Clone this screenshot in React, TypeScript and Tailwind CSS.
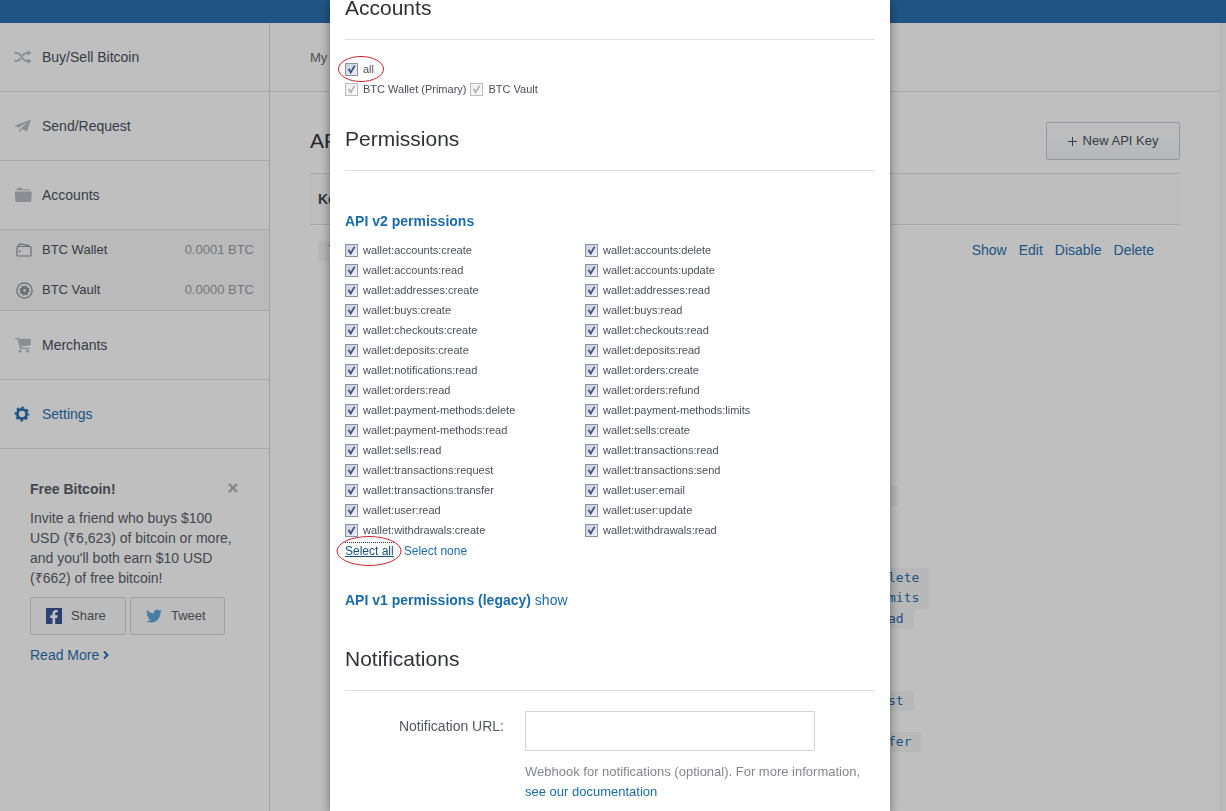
import { useState } from "react";
import { FaFacebookF, FaTwitter } from "react-icons/fa";

const leftScopes = [
  "wallet:accounts:create",
  "wallet:accounts:read",
  "wallet:addresses:create",
  "wallet:buys:create",
  "wallet:checkouts:create",
  "wallet:deposits:create",
  "wallet:notifications:read",
  "wallet:orders:read",
  "wallet:payment-methods:delete",
  "wallet:payment-methods:read",
  "wallet:sells:read",
  "wallet:transactions:request",
  "wallet:transactions:transfer",
  "wallet:user:read",
  "wallet:withdrawals:create",
];

const rightScopes = [
  "wallet:accounts:delete",
  "wallet:accounts:update",
  "wallet:addresses:read",
  "wallet:buys:read",
  "wallet:checkouts:read",
  "wallet:deposits:read",
  "wallet:orders:create",
  "wallet:orders:refund",
  "wallet:payment-methods:limits",
  "wallet:sells:create",
  "wallet:transactions:read",
  "wallet:transactions:send",
  "wallet:user:email",
  "wallet:user:update",
  "wallet:withdrawals:read",
];

const allScopes = [...leftScopes, ...rightScopes];

// tails of the granted scopes, one per table line, null where the scope is too short to show
const scopeTails = [
  ...Array(12).fill(null),
  "",
  null,
  null,
  null,
  "lete",
  "mits",
  "ad",
  null,
  null,
  null,
  "st",
  null,
  "fer",
];

function ShuffleIcon() {
  return (
    <svg width="18" height="14" viewBox="0 0 18 14" fill="none" stroke="currentColor" strokeWidth="2">
      <path d="M0.5 3h2.500c4 0 5.500 8 9.500 8H14" />
      <path d="M0.500 11h2.500c1.500 0 2.600-1.100 3.600-2.600M8.600 5.600C9.600 4.100 10.800 3 12.500 3H14" />
      <path d="M13.500 0.200L17.800 3l-4.300 2.800zM13.500 8.200l4.300 2.800-4.300 2.800z" fill="currentColor" stroke="none" />
    </svg>
  );
}

function PlaneIcon() {
  return (
    <svg width="18" height="14" viewBox="0 0 18 14" fill="currentColor">
      <path d="M17 0.500L0.500 6.800l4.200 1.800L14 2.800 6.800 9.600l6.200 2.800z" />
      <path d="M5.300 9.800v3.600l2.600-2.300z" />
    </svg>
  );
}

function FolderIcon() {
  return (
    <svg width="18" height="16" viewBox="0 0 18 16" fill="currentColor">
      <path d="M2 3.200L3.500 0.800h4l1 1.500h7.500v0.900z" />
      <path d="M0.800 4.500h17l-0.600 10.500H1.500z" />
    </svg>
  );
}

function WalletIcon() {
  return (
    <svg width="16" height="14" viewBox="0 0 16 14" fill="none" stroke="currentColor" strokeWidth="1.2">
      <rect x="1" y="3.500" width="14" height="9.500" rx="1" />
      <path d="M1.500 3.500L3.800 0.800l8.700 1.500 0.400 1.200" />
      <circle cx="3.700" cy="8.200" r="0.900" fill="currentColor" stroke="none" />
    </svg>
  );
}

function VaultIcon() {
  return (
    <svg width="17" height="17" viewBox="0 0 16 16" fill="none" stroke="currentColor">
      <circle cx="8" cy="8" r="7.200" strokeWidth="1.200" />
      <circle cx="8" cy="8" r="2.600" strokeWidth="2.600" />
      <circle cx="8" cy="8" r="4.300" strokeWidth="1.200" strokeDasharray="1.700 1.677" />
    </svg>
  );
}

function CartIcon() {
  return (
    <svg width="18" height="16" viewBox="0 0 18 16" fill="currentColor">
      <path d="M1 0.800h3.400l0.500 1H16.800v6.200L7.300 9.500l0.300 1.200h8V12H6L3.500 2.200H1.500z" />
      <circle cx="6" cy="14" r="1.600" />
      <circle cx="13.600" cy="14" r="1.600" />
    </svg>
  );
}

function GearIcon() {
  return (
    <svg width="16" height="16" viewBox="0 0 16 16" fill="none" stroke="currentColor">
      <circle cx="8" cy="8" r="4.600" strokeWidth="2.800" />
      <circle cx="8" cy="8" r="6.400" strokeWidth="2" strokeDasharray="2.600 2.427" strokeDashoffset="1.300" />
    </svg>
  );
}

function NavItem({ icon, label, active = false }) {
  return (
    <a
      href="#"
      className={
        active
          ? "flex h-[69px] items-center border-b border-[#dfe2e6] pl-[14px] text-sm text-[#2b71b1]"
          : "flex h-[69px] items-center border-b border-[#dfe2e6] pl-[14px] text-sm text-[#4b505c]"
      }
    >
      <span className={active ? "w-7 text-[#2b71b1]" : "w-7 text-[#b9bdc3]"}>{icon}</span>
      {label}
    </a>
  );
}

function AccountItem({ icon, label, balance }) {
  return (
    <a href="#" className="flex h-10 items-center pr-[15px] pl-4 text-[13px] text-[#4b505c]">
      <span className="w-[26px] text-[#8d9299]">{icon}</span>
      {label}
      <span className="ml-auto text-[#9b9fa5]">{balance}</span>
    </a>
  );
}

function Sidebar() {
  return (
    <aside className="w-[270px] shrink-0 border-r border-[#d5d8df]">
      <nav>
        <NavItem icon={<ShuffleIcon />} label="Buy/Sell Bitcoin" />
        <NavItem icon={<PlaneIcon />} label="Send/Request" />
        <NavItem icon={<FolderIcon />} label="Accounts" />
        <div className="border-b border-[#dfe2e6] bg-[#f9f9f9]">
          <AccountItem icon={<WalletIcon />} label="BTC Wallet" balance="0.0001 BTC" />
          <AccountItem icon={<VaultIcon />} label="BTC Vault" balance="0.0000 BTC" />
        </div>
        <NavItem icon={<CartIcon />} label="Merchants" />
        <NavItem icon={<GearIcon />} label="Settings" active />
      </nav>

      <section className="px-[30px] pt-[30px] text-sm leading-5 text-[#5a5e68]">
        <div className="mb-[9px] flex items-start justify-between">
          <h3 className="font-bold">Free Bitcoin!</h3>
          <button aria-label="Dismiss" className="pt-1 text-[#b0b2b6]">
            <svg width="12" height="10" viewBox="0 0 12 10" fill="none" stroke="currentColor" strokeWidth="2.400">
              <path d="M2 1l8 8M10 1L2 9" />
            </svg>
          </button>
        </div>
        <p>
          Invite a friend who buys $100 USD (₹6,623) of bitcoin or more, and you'll both earn $10 USD (₹662) of free
          bitcoin!
        </p>
        <div className="mt-[9px] mb-[10px] flex gap-1">
          <button className="flex h-[38px] w-24 items-center gap-[9px] rounded-[2px] border border-[#d3d6dc] bg-[#fbfbfc] pl-[15px] text-[13px]">
            <span className="flex size-4 items-end justify-end bg-[#3b5598] pr-px text-white">
              <FaFacebookF size={14} />
            </span>
            Share
          </button>
          <button className="flex h-[38px] w-[95px] items-center gap-[9px] rounded-[2px] border border-[#d3d6dc] bg-[#fbfbfc] pl-[15px] text-[13px]">
            <FaTwitter size={16} className="text-[#5fa9dd]" />
            Tweet
          </button>
        </div>
        <a href="#" className="inline-flex items-center gap-1 text-[#2b71b1]">
          Read More
          <svg width="6" height="10" viewBox="0 0 6 10" fill="none" stroke="currentColor" strokeWidth="2">
            <path d="M1 1.500L4.500 5 1 8.500" />
          </svg>
        </a>
      </section>
    </aside>
  );
}

function KeysPage() {
  return (
    <main className="min-w-0 flex-1">
      <div className="flex h-[69px] items-center border-b border-[#dfe2e6] px-10 pt-px text-[13px] text-[#6a6e76]">
        My
      </div>
      <div className="px-10 pt-[30px]">
        <div className="mb-[13px] flex items-center justify-between">
          <h1 className="text-[21px] text-[#33353a]">AP</h1>
          <button className="flex h-[38px] w-[134px] items-center justify-center gap-[6px] rounded-[2px] border border-[#c9cdd6] bg-linear-to-b from-white to-[#f4f6f9] text-[13px] text-[#4b505c]">
            <svg width="9" height="9" viewBox="0 0 9 9" stroke="currentColor" strokeWidth="1">
              <path d="M0 4.500h9M4.500 0v9" />
            </svg>
            New API Key
          </button>
        </div>
        <table className="w-full text-left text-sm">
          <thead>
            <tr className="h-[51px] border-y border-[#dfe1e5] bg-[#fcfcfc]">
              <th className="w-[568px] pl-2 font-bold text-[#44484f]">Ke</th>
              <th />
              <th />
            </tr>
          </thead>
          <tbody>
            <tr className="align-top">
              <td className="pt-[15px] pl-2">
                <code className="inline-block h-5 bg-[#f5f5f5] px-[10px] font-['DejaVu_Sans_Mono',monospace] text-[13px] leading-5 text-[#44484f]">
                  l
                </code>
              </td>
              <td className="pt-[15px]">
                <ul className="font-['DejaVu_Sans_Mono',monospace] text-[13px] leading-5 text-[#2b71b1]">
                  {scopeTails.map((tail, i) => (
                    <li key={i} className="flex h-5 even:h-[21px]">
                      {tail !== null && (
                        <code className="bg-[#f6f6f6] px-[10px] font-['DejaVu_Sans_Mono',monospace]">{tail}</code>
                      )}
                    </li>
                  ))}
                </ul>
              </td>
              <td className="pt-[15px] pr-[26px]">
                <div className="flex justify-end gap-3 leading-5 text-[#2b71b1]">
                  <a href="#">Show</a>
                  <a href="#">Edit</a>
                  <a href="#">Disable</a>
                  <a href="#">Delete</a>
                </div>
              </td>
            </tr>
          </tbody>
        </table>
      </div>
    </main>
  );
}

function Checkbox({ label, checked, disabled = false, onChange = undefined }) {
  return (
    <label className="flex h-5 items-center gap-[5px] text-[11px] text-[#4c4f5a]">
      <span className="grid size-[13px]">
        <input
          type="checkbox"
          checked={checked}
          disabled={disabled}
          onChange={onChange}
          className="col-start-1 row-start-1 size-[13px] appearance-none border border-[#8c919c] bg-linear-to-br from-[#c6cfde] to-[#eef2f8] disabled:border-[#bcbcbc] disabled:from-[#efefef] disabled:to-[#fbfbfb]"
        />
        {checked && (
          <svg
            viewBox="0 0 13 13"
            className={
              disabled
                ? "pointer-events-none col-start-1 row-start-1 text-[#b5b5b5]"
                : "pointer-events-none col-start-1 row-start-1 text-[#42527f]"
            }
            fill="none"
            stroke="currentColor"
            strokeWidth="1.800"
          >
            <path d="M3.500 5.800l2.200 3.700L9.700 2.600" />
          </svg>
        )}
      </span>
      {label}
    </label>
  );
}

function SectionTitle({ children }) {
  return (
    <h2 className="border-b border-[#e2e2e2] pb-4 text-[21px] leading-[30px] text-[#303236]">{children}</h2>
  );
}

function EditKeyModal() {
  const [allAccounts, setAllAccounts] = useState(true);
  const [selected, setSelected] = useState<string[]>(allScopes);

  const toggle = (scope: string) =>
    setSelected(selected.includes(scope) ? selected.filter((s) => s !== scope) : [...selected, scope]);

  return (
    <div role="dialog" className="h-full w-[560px] overflow-hidden bg-white px-[15px] shadow-[0_3px_10px_rgba(0,0,0,0.45)]">
      <div className="-mt-[7px]">
        <SectionTitle>Accounts</SectionTitle>
      </div>
      <div className="mt-[19px] mb-[25px]">
        <div className="relative w-fit">
          <Checkbox label="all" checked={allAccounts} onChange={() => setAllAccounts(!allAccounts)} />
          <svg width="46" height="28" className="pointer-events-none absolute -top-1 -left-[7px]" fill="none" stroke="#c9252d">
            <ellipse cx="23" cy="14" rx="22.500" ry="12.500" />
          </svg>
        </div>
        <div className="flex gap-1">
          <Checkbox label="BTC Wallet (Primary)" checked disabled />
          <Checkbox label="BTC Vault" checked disabled />
        </div>
      </div>

      <SectionTitle>Permissions</SectionTitle>
      <h3 className="mt-10 mb-[9px] text-sm font-bold text-[#1b6cab]">API v2 permissions</h3>
      <div className="flex">
        {[leftScopes, rightScopes].map((scopes, i) => (
          <div key={i} className="w-[240px]">
            {scopes.map((scope) => (
              <Checkbox
                key={scope}
                label={scope}
                checked={selected.includes(scope)}
                onChange={() => toggle(scope)}
              />
            ))}
          </div>
        ))}
      </div>
      <div className="flex gap-[10px] pt-px text-xs leading-5 text-[#1b6cab]">
        <div className="relative pt-px">
          <button
            className="block h-4 border-t border-dotted border-[#333] leading-[14px] text-[#17507f] underline"
            onClick={() => setSelected(allScopes)}
          >
            Select all
          </button>
          <svg width="66" height="32" className="pointer-events-none absolute -top-[6px] -left-[9px]" fill="none" stroke="#c9252d">
            <ellipse cx="33" cy="16" rx="32" ry="14.500" />
          </svg>
        </div>
        <button onClick={() => setSelected([])}>Select none</button>
      </div>
      <p className="mt-[29px] mb-[34px] text-sm text-[#1b6cab]">
        <span className="font-bold">API v1 permissions (legacy)</span> <a href="#">show</a>
      </p>

      <SectionTitle>Notifications</SectionTitle>
      <div className="flex gap-[21px] pt-5">
        <label htmlFor="url" className="w-[159px] pt-[5px] text-right text-sm text-[#54575f]">
          Notification URL:
        </label>
        <div className="flex-1">
          <input id="url" type="text" className="block h-10 w-[290px] border border-[#d4d4d6] px-3 text-sm" />
          <p className="mt-[11px] text-[13px] leading-5 text-[#84868a]">
            Webhook for notifications (optional). For more information,{" "}
            <a href="#" className="text-[#1b6cab]">
              see our documentation
            </a>
          </p>
        </div>
      </div>
    </div>
  );
}

export default function App() {
  return (
    <div className="h-screen overflow-hidden bg-[#f8f8f8] font-['Liberation_Sans',Arial,sans-serif]">
      <header className="h-[23px] bg-[#2a71b0]" />
      <div className="mr-[5px] flex min-h-screen border-r border-[#eceef0] bg-white">
        <Sidebar />
        <KeysPage />
      </div>
      <div className="fixed inset-0 flex justify-center bg-black/25 pr-[6px]">
        <EditKeyModal />
      </div>
    </div>
  );
}
